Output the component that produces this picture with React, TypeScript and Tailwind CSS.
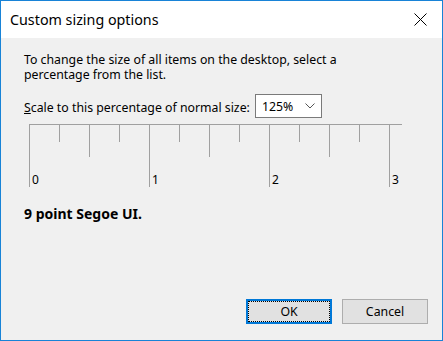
export default function App() {
  const ticks = Array.from({ length: 13 }, (_, i) => i);
  return (
    <div className="w-[443px] h-[341px] border border-[#1883d7] bg-[#f0f0f0] flex flex-col font-['Noto_Sans',sans-serif] text-black">
      <div className="h-[37px] bg-white flex items-center justify-between pl-[9px] pr-[15px]">
        <span className="text-[14.3px] leading-[20px]">Custom sizing options</span>
        <svg width="13" height="13" viewBox="0 0 13 13">
          <path d="M0.5 0.5 L12.5 12.5 M12.5 0.5 L0.5 12.5" stroke="#000" strokeWidth="1" fill="none" />
        </svg>
      </div>
      <div className="flex-1 flex flex-col pl-[23px] pt-[14px]">
        <p className="text-[12.3px] leading-[15px] w-[340px]">
          To change the size of all items on the desktop, select a percentage from the list.
        </p>
        <div className="flex items-start mt-[12px]">
          <span className="text-[12.3px] leading-[15px] pt-[6px]">
            <span className="underline">S</span>cale to this percentage of normal size:
          </span>
          <div className="ml-[5px] w-[67px] h-[24px] bg-white border border-[#7a7a7a] flex items-center justify-between pl-[6px] pr-[6px]">
            <span className="text-[12.3px] leading-[15px]">125%</span>
            <svg width="10" height="6" viewBox="0 0 10 6">
              <path d="M0.5 0.5 L5 5 L9.5 0.5" stroke="#555" strokeWidth="1" fill="none" />
            </svg>
          </div>
        </div>
        <svg width="376" height="64" viewBox="0 0 376 64" className="mt-[6px] ml-[5px]">
          <line x1="0" y1="0.5" x2="373" y2="0.5" stroke="#a0a0a0" />
          {ticks.map((i) => {
            const len = i % 4 === 0 ? 63 : i % 2 === 0 ? 33 : 18;
            return <line key={i} x1={i * 30 + 0.5} y1="0" x2={i * 30 + 0.5} y2={len} stroke="#a0a0a0" />;
          })}
          {[0, 1, 2, 3].map((n) => (
            <text key={n} x={n * 120 + 3} y="60" fontSize="12" fontFamily="Noto Sans, sans-serif" fill="#000">
              {n}
            </text>
          ))}
        </svg>
        <p className="mt-[17px] text-[14px] leading-[17px] font-bold">9 point Segoe UI.</p>
        <div className="mt-auto flex justify-end gap-[10px] pr-[14px] pb-[16px]">
          <button className="relative w-[86px] h-[25px] bg-[#e1e1e1] border-2 border-[#0078d7] text-[12.3px] leading-[15px]">
            <span className="absolute inset-0 border border-dotted border-black" />
            OK
          </button>
          <button className="w-[86px] h-[25px] bg-[#e1e1e1] border border-[#adadad] text-[12.3px] leading-[15px]">
            Cancel
          </button>
        </div>
      </div>
    </div>
  );
}
